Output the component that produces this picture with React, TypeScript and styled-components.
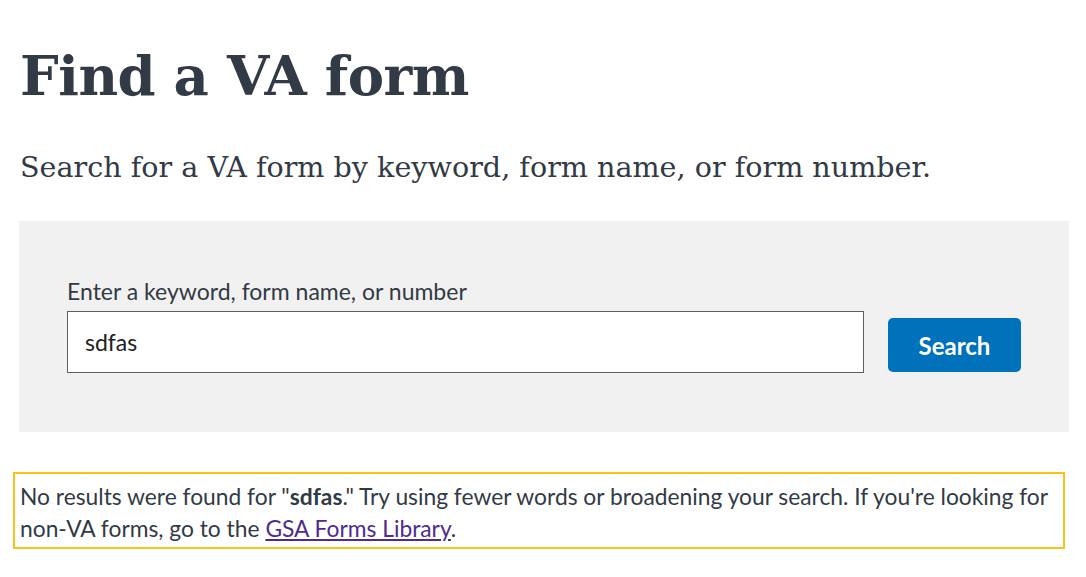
import styled, { createGlobalStyle } from 'styled-components'

const GlobalStyle = createGlobalStyle`
  body {
    margin: 0;
    background: #fff;
    color: #323a45;
    font-family: Lato, "Liberation Sans", sans-serif;
  }
`

const Page = styled.main`
  width: 1050px;
  padding: 0 0 0 19px;
`

const Title = styled.h1`
  margin: 0;
  padding-top: 40px;
  font-family: "DejaVu Serif", serif;
  font-weight: 700;
  font-size: 54.5px;
  line-height: 72px;
  color: #323a45;
  letter-spacing: -0.5px;
  padding-left: 1px;
`

const Lead = styled.p`
  margin: 37px 0 0;
  padding-left: 1px;
  font-family: "DejaVu Serif", serif;
  font-size: 28.6px;
  line-height: 36px;
  color: #323a45;
`

const SearchPanel = styled.section`
  margin-top: 36px;
  background: #f1f1f1;
  padding: 56px 48px 59px;
`

const Label = styled.label`
  display: block;
  font-size: 23px;
  line-height: 28px;
  margin-bottom: 6px;
`

const Row = styled.div`
  display: flex;
  align-items: flex-end;
`

const Input = styled.input`
  box-sizing: border-box;
  width: 797px;
  height: 62px;
  border: 1px solid #5b616b;
  background: #fff;
  padding: 0 17px;
  font-family: Lato, "Liberation Sans", sans-serif;
  font-size: 23px;
  color: #212121;
  outline: none;
`

const Button = styled.button`
  margin: 0 0 1px 24px;
  width: 133px;
  height: 54px;
  border: none;
  border-radius: 5px;
  background: #0071bb;
  color: #fff;
  font-family: Lato, "Liberation Sans", sans-serif;
  font-weight: 700;
  font-size: 24px;
  cursor: pointer;
`

const Message = styled.p`
  margin: 40px 0 0 -6px;
  width: 1038px;
  border: 2px solid #fdc01a;
  padding: 6px 5px 3px 5px;
  font-size: 22.8px;
  line-height: 32px;
  color: #323a45;

  strong {
    font-weight: 700;
  }

  a {
    color: #4c2c92;
  }
`

export default function App() {
  return (
    <>
      <GlobalStyle />
      <Page>
        <Title>Find a VA form</Title>
        <Lead>Search for a VA form by keyword, form name, or form number.</Lead>
        <SearchPanel>
          <Label htmlFor="va-form-query">Enter a keyword, form name, or number</Label>
          <Row>
            <Input id="va-form-query" defaultValue="sdfas" />
            <Button type="button">Search</Button>
          </Row>
        </SearchPanel>
        <Message>
          {'No results were found for "'}
          <strong>sdfas</strong>
          {'." Try using fewer words or broadening your search. If you\'re looking for '}
          {'non-VA forms, go to the '}
          <a href="#gsa">GSA Forms Library</a>
          {'.'}
        </Message>
      </Page>
    </>
  )
}
